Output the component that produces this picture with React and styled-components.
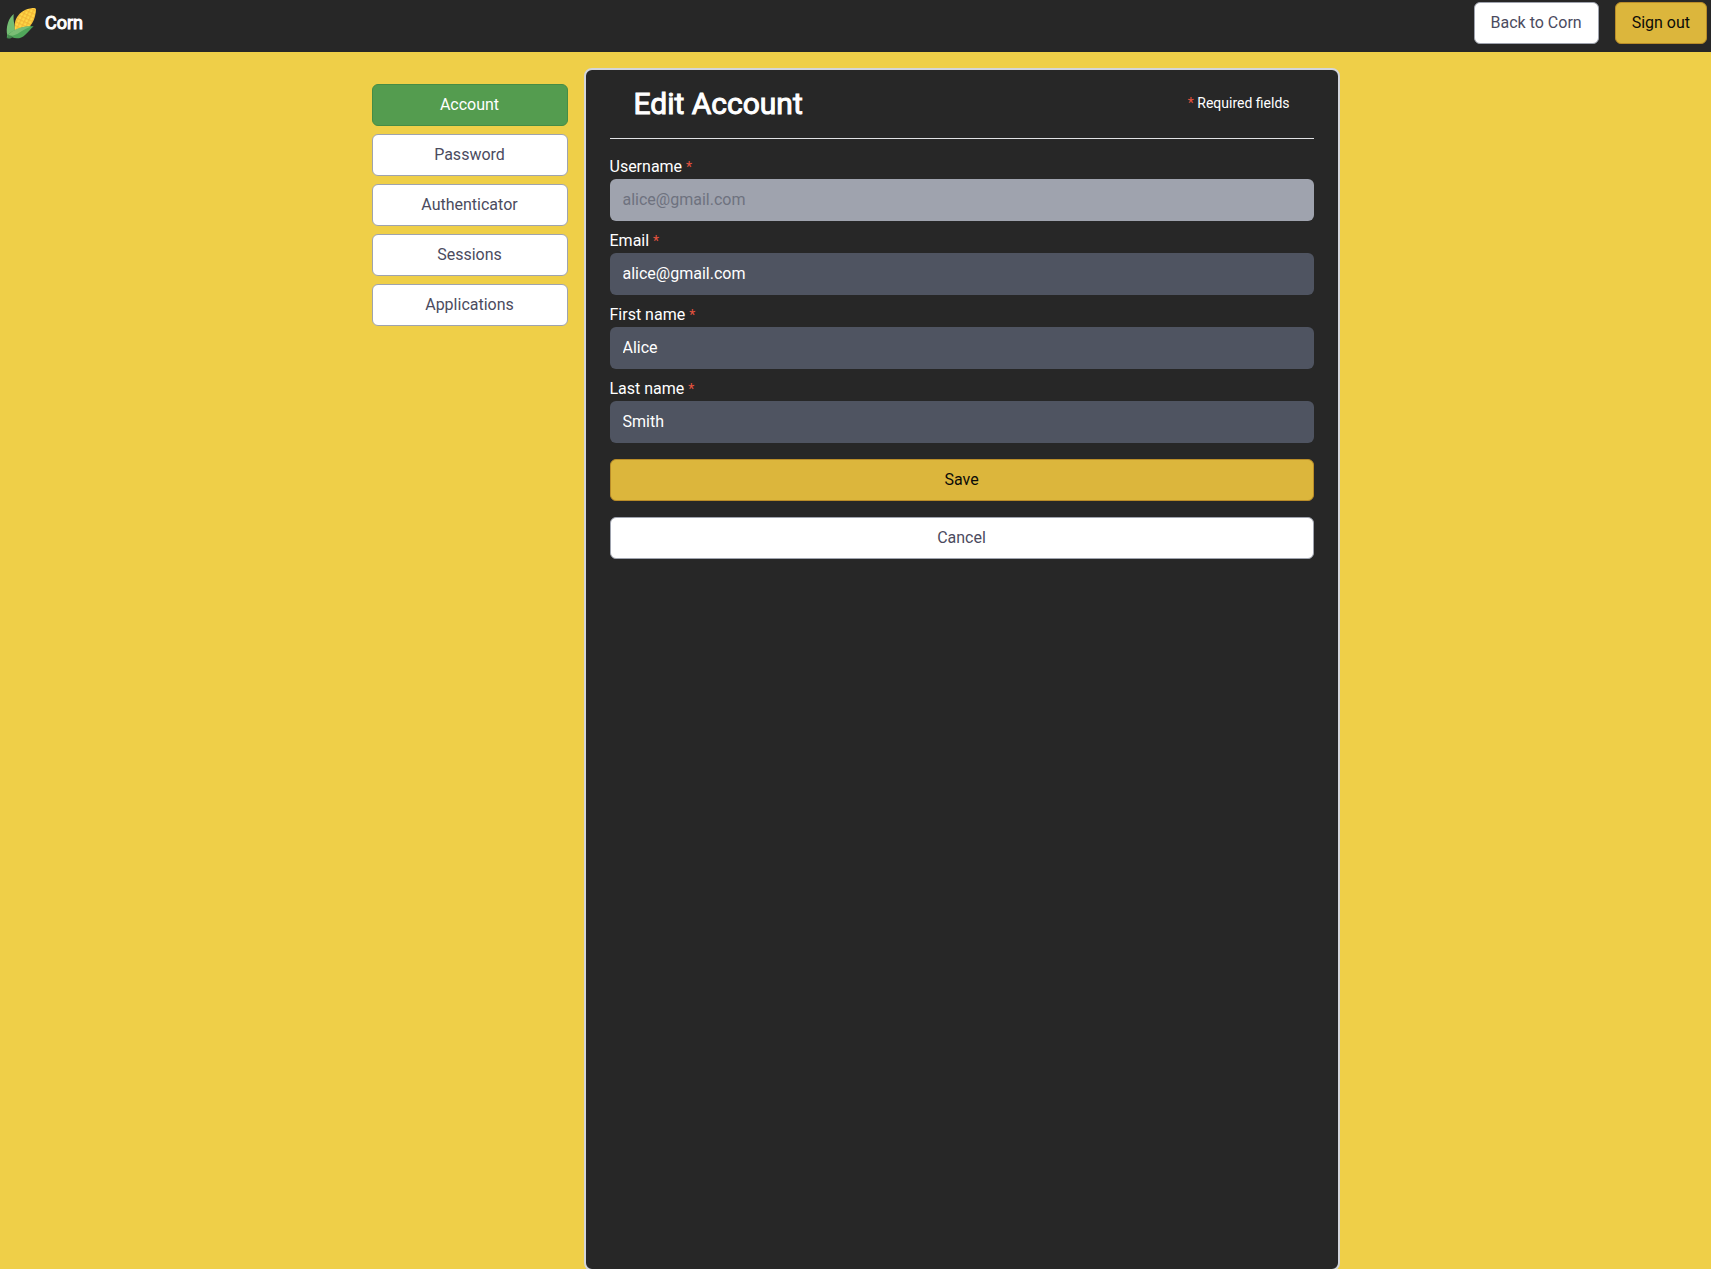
import React from "react";
import styled, { createGlobalStyle, css } from "styled-components";

const GlobalStyle = createGlobalStyle`
  *, *::before, *::after { box-sizing: border-box; }
  body {
    margin: 0;
    background: #efcf48;
    font-family: Roboto, "Liberation Sans", sans-serif;
    font-size: 16px;
    line-height: 24px;
  }
`;

const Page = styled.div`
  display: flex;
  flex-direction: column;
  min-height: 100vh;
  overflow: hidden;
`;

const Header = styled.header`
  display: flex;
  align-items: flex-start;
  justify-content: space-between;
  padding: 2px 4px 8px;
  background: #272727;
`;

const Brand = styled.a`
  display: flex;
  align-items: center;
  gap: 8px;
  height: 42px;
  color: #fff;
  font-size: 18px;
  font-weight: 400;
  -webkit-text-stroke: 1px currentColor;
  text-decoration: none;
`;

const HeaderActions = styled.div`
  display: flex;
  gap: 16px;
`;

const variants = {
  plain: css`
    background: #fff;
    border-color: #9fa3ae;
    color: #4b4b5e;
  `,
  gold: css`
    background: #dcb63c;
    border-color: #b98c28;
    color: #0c0c08;
  `,
  active: css`
    background: #549c4f;
    border-color: #468c46;
    color: #fff;
  `,
};

const controlStyle = css`
  display: block;
  padding: 8px 16px;
  border: 1px solid;
  border-radius: 6px;
  font-family: inherit;
  font-size: 16px;
  font-weight: 400;
  line-height: 24px;
  text-align: center;
  text-decoration: none;
  cursor: pointer;
  ${({ $variant }) => variants[$variant]}
`;

const Button = styled.button`
  ${controlStyle}
`;

const NavLink = styled.a`
  ${controlStyle}
`;

const Main = styled.main`
  display: flex;
  flex: 1;
  gap: 16px;
  width: 100%;
  max-width: 1000px;
  margin: 0 auto;
  padding: 16px 16px 0;
`;

const Sidebar = styled.nav`
  display: flex;
  flex: none;
  flex-direction: column;
  gap: 8px;
  width: 196px;
  padding-top: 16px;
`;

const Card = styled.section`
  flex: 1;
  min-width: 0;
  margin-bottom: -2px;
  padding: 0 24px 24px;
  background: #272727;
  border: 2px solid #d3d5da;
  border-radius: 8px;
  color: #fff;
`;

const CardHeader = styled.div`
  display: flex;
  align-items: center;
  justify-content: space-between;
  height: 69px;
  padding: 0 24px 2px;
  border-bottom: 1px solid #e1e2e5;
`;

const Title = styled.h1`
  margin: 0;
  padding-top: 2px;
  font-size: 30px;
  line-height: 40px;
  font-weight: 400;
  -webkit-text-stroke: 1px currentColor;
`;

const Note = styled.span`
  font-size: 14px;
`;

const Star = styled.span`
  color: #e5533f;
  font-size: 14px;
`;

const Form = styled.form`
  display: flex;
  flex-direction: column;
  gap: 16px;
  padding-top: 16px;
`;

const Fields = styled.div`
  display: flex;
  flex-direction: column;
  gap: 8px;
`;

const Field = styled.div`
  display: flex;
  flex-direction: column;
`;

const Label = styled.label`
  line-height: 24px;
`;

const Input = styled.input`
  width: 100%;
  height: 42px;
  padding: 8px 13px 10px;
  border: 0;
  border-radius: 6px;
  background: #4f5461;
  color: #fff;
  font-family: inherit;
  font-size: 16px;
  line-height: 24px;

  &:disabled {
    background: #9fa3ae;
    color: #6e727f;
  }
`;

const Logo = styled.svg`
  width: 32px;
  height: 32px;
  margin-left: 1px;
`;

function CornLogo() {
  return (
    <Logo viewBox="0 0 96 96" aria-hidden="true">
      <defs>
        <pattern id="kernels" width="11" height="11" patternUnits="userSpaceOnUse" patternTransform="rotate(25)">
          <rect width="11" height="11" fill="#ffd746" />
          <path d="M0 5H11M5 0V11" stroke="#f0b233" strokeWidth="3" />
        </pattern>
      </defs>
      <path d="M28 70C28 50 30 38 39 26C51 10 70 3 89 3Q94 4 93 10C91 30 86 46 72 62C54 70 40 73 28 70Z" fill="url(#kernels)" />
      <path d="M26 21C13 32 9 46 6 60C4 72 6 82 8 88L29 72C31 59 24 43 26 21Z" fill="#74bd73" />
      <path d="M86 58C68 56 51 60 37 67C24 72 14 77 8 84L5 91L16 94L21 91C35 97 50 94 60 84C70 75 77 66 86 58Z" fill="#50a75a" />
      <path d="M78 59C62 57 43 61 30 69C20 74 12 80 8 88C24 88 36 82 46 75C56 68 66 63 78 59Z" fill="#7abe75" />
      <path d="M7 83Q12 88 5 91L7 94Q13 96 19 92L22 87Z" fill="#43884d" />
    </Logo>
  );
}

const links = ["Account", "Password", "Authenticator", "Sessions", "Applications"];

const fields = [
  { id: "username", label: "Username", value: "alice@gmail.com", disabled: true },
  { id: "email", label: "Email", value: "alice@gmail.com", type: "email" },
  { id: "firstName", label: "First name", value: "Alice" },
  { id: "lastName", label: "Last name", value: "Smith" },
];

export default function App() {
  return (
    <Page>
      <GlobalStyle />
      <Header>
        <Brand href="#">
          <CornLogo />
          Corn
        </Brand>
        <HeaderActions>
          <NavLink $variant="plain" href="#">Back to Corn</NavLink>
          <Button $variant="gold" type="button">Sign out</Button>
        </HeaderActions>
      </Header>
      <Main>
        <Sidebar>
          {links.map((name, i) => (
            <NavLink key={name} href="#" $variant={i === 0 ? "active" : "plain"}>
              {name}
            </NavLink>
          ))}
        </Sidebar>
        <Card>
          <CardHeader>
            <Title>Edit Account</Title>
            <Note><Star>*</Star> Required fields</Note>
          </CardHeader>
          <Form onSubmit={(e) => e.preventDefault()}>
            <Fields>
              {fields.map((f) => (
                <Field key={f.id}>
                  <Label htmlFor={f.id}>
                    {f.label} <Star>*</Star>
                  </Label>
                  <Input id={f.id} type={f.type || "text"} defaultValue={f.value} disabled={f.disabled} />
                </Field>
              ))}
            </Fields>
            <Button $variant="gold" type="submit">Save</Button>
            <Button $variant="plain" type="button">Cancel</Button>
          </Form>
        </Card>
      </Main>
    </Page>
  );
}
